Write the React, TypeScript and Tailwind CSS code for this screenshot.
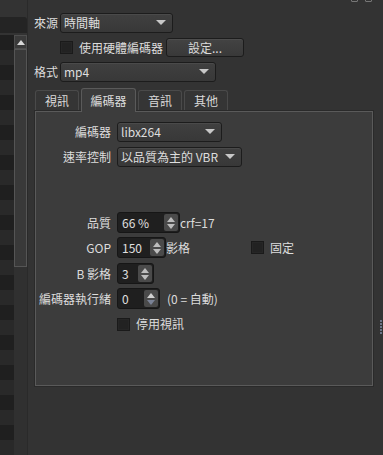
import React from "react";

const font = { fontFamily: '"Noto Sans CJK TC", "Noto Sans", sans-serif' };

function Arrow() {
  return (
    <svg width="10" height="6" viewBox="0 0 10 6" className="shrink-0">
      <path d="M0 0h10L5 5z" fill="#c8c8c8" />
    </svg>
  );
}

function Combo({ text, width }: { text: string; width: string }) {
  return (
    <div
      className={`${width} h-[20px] flex items-center justify-between pl-[3px] pr-[6px] rounded-[3px] border border-[#1c1c1c] bg-gradient-to-b from-[#404040] to-[#383838] shadow-[inset_0_1px_0_#4a4a4a] text-[#dedede]`}
    >
      <span className="leading-none">{text}</span>
      <Arrow />
    </div>
  );
}

function Check() {
  return <div className="w-[13px] h-[13px] bg-[#222222] border border-[#1a1a1a] shadow-[inset_0_0_0_1px_#262626]" />;
}

function Spin({ value, width, dim }: { value: string; width: string; dim?: boolean }) {
  return (
    <div className={`${width} h-[21px] flex rounded-[3px] border border-[#161616] bg-[#1f1f1f]`}>
      <div className="flex-1 flex items-center pl-[4px] text-[#e0e0e0] leading-none">{value}</div>
      <div className="w-[14px] my-[1px] mr-[1px] rounded-[2px] bg-[#4a4a4a] flex flex-col items-center justify-center gap-[2px]">
        <svg width="8" height="5" viewBox="0 0 8 5">
          <path d="M0 5h8L4 0z" fill={dim ? "#d0d0d0" : "#bdbdbd"} />
        </svg>
        <svg width="8" height="5" viewBox="0 0 8 5">
          <path d="M0 0h8L4 5z" fill={dim ? "#7a8296" : "#bdbdbd"} />
        </svg>
      </div>
    </div>
  );
}

function Tab({ label, width, active }: { label: string; width: string; active?: boolean }) {
  return (
    <div
      className={`${width} flex items-center justify-center rounded-t-[3px] border border-b-0 ${
        active
          ? "h-[24px] bg-[#3c3c3c] border-[#5a5a5a] -mb-[1px] z-10 relative"
          : "h-[21px] bg-[#353535] border-[#4a4a4a] text-[#dadada]"
      }`}
    >
      {label}
    </div>
  );
}

export default function App() {
  const rows = Array.from({ length: 14 });
  return (
    <div className="relative w-[383px] h-[455px] bg-[#333333] flex overflow-hidden text-[12px] text-[#dcdcdc]" style={font}>
      {/* Left list strip */}
      <div className="w-[28px] h-full flex flex-col border-r border-[#2a2a2a]">
        <div className="h-[22px]" />
        <div className="h-[21px] bg-[#242424] rounded-tr-[3px]" />
        <div className="h-[2px]" />
        <div className="flex flex-1">
          <div className="w-[14px] flex flex-col">
            {rows.map((_, i) => (
              <React.Fragment key={i}>
                <div className="h-[15px] bg-[#1f1f1f]" />
                <div className="h-[15px] bg-[#292929]" />
              </React.Fragment>
            ))}
          </div>
          <div className="w-[13px] flex flex-col bg-[#303030]">
            <div className="h-[14px] bg-[#3a3a3a] border border-[#4e4e4e] flex items-center justify-center">
              <svg width="8" height="5" viewBox="0 0 8 5">
                <path d="M0 5h8L4 0z" fill="#d8d8d8" />
              </svg>
            </div>
            <div className="h-[218px] bg-[#393939] border border-[#555555]" />
          </div>
        </div>
      </div>

      {/* Main */}
      <div className="flex-1 flex flex-col pl-[6px] pt-[13px]">
        <div className="flex items-center h-[20px]">
          <span className="w-[26px]">來源</span>
          <Combo text="時間軸" width="w-[113px]" />
        </div>
        <div className="flex items-center h-[19px] mt-[5px] pl-[26px]">
          <Check />
          <span className="ml-[6px] w-[87px]">使用硬體編碼器</span>
          <div className="w-[78px] h-[19px] flex items-center justify-center rounded-[3px] border border-[#1c1c1c] bg-gradient-to-b from-[#434343] to-[#393939] shadow-[inset_0_1px_0_#4d4d4d]">
            設定...
          </div>
        </div>
        <div className="flex items-center h-[20px] mt-[5px]">
          <span className="w-[26px]">格式</span>
          <Combo text="mp4" width="w-[156px]" />
        </div>

        {/* Tabs */}
        <div className="flex items-end gap-[2px] mt-[5px] ml-[1px] h-[24px]">
          <Tab label="視訊" width="w-[44px]" />
          <Tab label="編碼器" width="w-[55px]" active />
          <Tab label="音訊" width="w-[44px]" />
          <Tab label="其他" width="w-[44px]" />
        </div>

        <div className="ml-[1px] w-[338px] h-[275px] bg-[#3c3c3c] border border-[#5a5a5a] shadow-[0_0_0_1px_#2a2a2a] pt-[10px]">
          <div className="flex items-center h-[20px]">
            <span className="w-[75px] text-right">編碼器</span>
            <span className="w-[6px]" />
            <Combo text="libx264" width="w-[105px]" />
          </div>
          <div className="flex items-center h-[20px] mt-[5px]">
            <span className="w-[75px] text-right">速率控制</span>
            <span className="w-[6px]" />
            <Combo text="以品質為主的 VBR" width="w-[125px]" />
          </div>

          <div className="flex items-center h-[21px] mt-[45px]">
            <span className="w-[75px] text-right">品質</span>
            <span className="w-[6px]" />
            <Spin value="66 %" width="w-[63px]" />
            <span>crf=17</span>
          </div>
          <div className="flex items-center h-[21px] mt-[4px]">
            <span className="w-[75px] text-right">GOP</span>
            <span className="w-[6px]" />
            <Spin value="150" width="w-[49px]" />
            <span className="w-[85px]">影格</span>
            <Check />
            <span className="ml-[6px]">固定</span>
          </div>
          <div className="flex items-center h-[21px] mt-[5px]">
            <span className="w-[75px] text-right">B 影格</span>
            <span className="w-[6px]" />
            <Spin value="3" width="w-[37px]" />
          </div>
          <div className="flex items-center h-[21px] mt-[4px]">
            <span className="w-[75px] text-right">編碼器執行緒</span>
            <span className="w-[6px]" />
            <Spin value="0" width="w-[43px]" dim />
            <span className="ml-[7px]">(0 = 自動)</span>
          </div>
          <div className="flex items-center h-[14px] mt-[8px]">
            <span className="w-[81px]" />
            <Check />
            <span className="ml-[6px]">停用視訊</span>
          </div>
        </div>
      </div>

      {/* decorations */}
      <div className="absolute top-[-4px] left-[351px] w-[7px] h-[6px] border border-[#777] rounded-[1px]" />
      <div className="absolute top-[-4px] left-[365px] w-[7px] h-[6px] border border-[#777] rounded-[1px]" />
      <div className="absolute left-[380px] top-[320px] flex flex-col gap-[1px]">
        {[0, 1, 2, 3, 4].map((i) => (
          <div key={i} className="w-[2px] h-[2px] bg-[#6c7488]" />
        ))}
      </div>
    </div>
  );
}
